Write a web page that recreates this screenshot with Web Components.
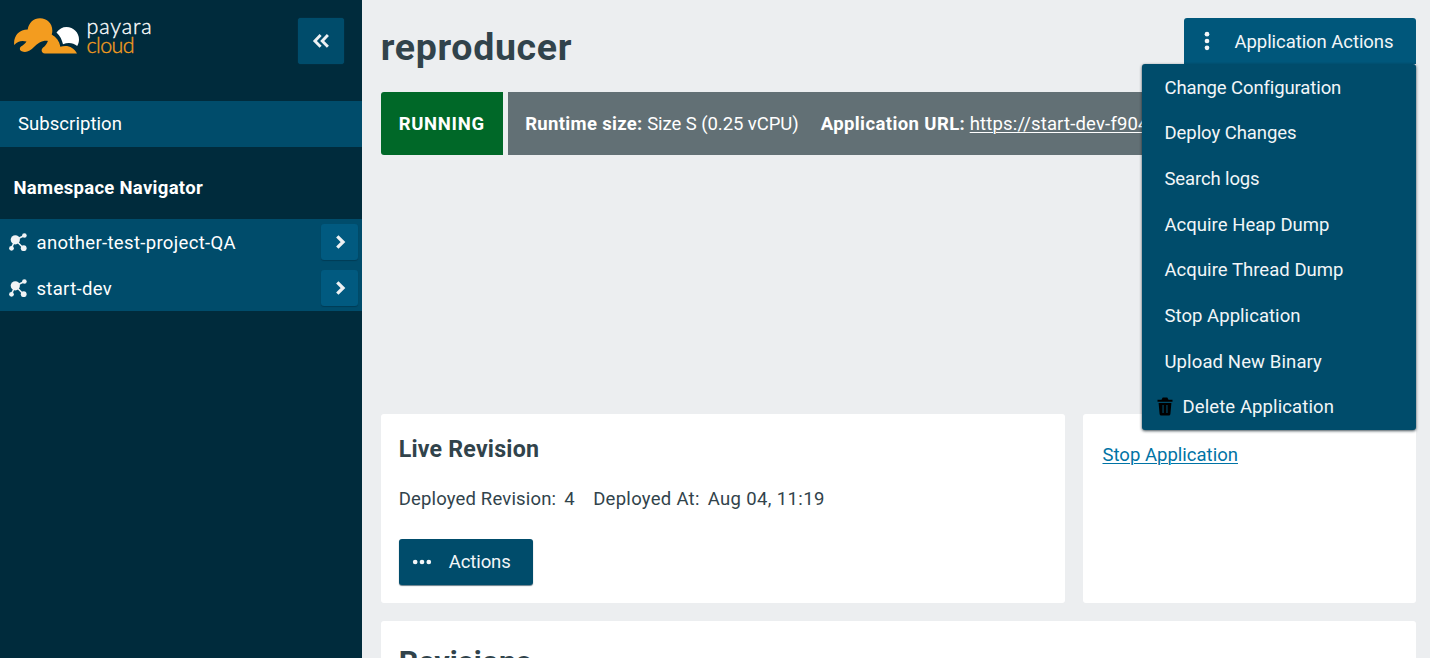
<!DOCTYPE html>
<html lang="en">
<head>
<meta charset="utf-8">
<title>Payara Cloud</title>
<style>
html,body{margin:0;height:100%;overflow:hidden}
body{font-family:Roboto,"Liberation Sans",sans-serif;font-size:18.5px;background:#eceef0}
</style>
</head>
<body>
<cloud-console></cloud-console>
<script>
function define(name, html, init) {
  const template = document.createElement('template');
  template.innerHTML = html;
  customElements.define(name, class extends HTMLElement {
    connectedCallback() {
      if (this.shadowRoot) return;
      this.attachShadow({ mode: 'open' }).appendChild(template.content.cloneNode(true));
      if (init) init.call(this, this.shadowRoot);
    }
  });
}

/* Label whose tracking is adjusted to the advance width in its w attribute. */
define('track-text', `
<style>:host{display:inline-block;white-space:nowrap;flex:none;overflow:visible}span{display:inline-block}
:host([underline]) span{text-decoration:underline;text-underline-offset:2px;text-decoration-thickness:1px;text-decoration-skip-ink:auto}</style>
<span><slot></slot></span>`, function (root) {
  const span = root.querySelector('span');
  const w = parseFloat(this.getAttribute('w'));
  const natural = span.getBoundingClientRect().width;
  this.style.letterSpacing = ((w - natural) / this.textContent.length).toFixed(4) + 'px';
  this.style.width = w + 'px';
});

define('payara-logo', `
<style>
:host{display:flex;width:140px;height:44px;color:#fff}
svg{flex:none;display:block}
.words{display:flex;flex-direction:column;margin-left:6.500px;font:300 21.500px/19.500px Lato,sans-serif;-webkit-text-stroke:.35px currentColor}
.c{color:#f39c1f}
</style>
<svg width="66" height="40" viewBox="0 0 66 40">
<path fill="#fff" d="M42.500 14.500C45 11 48.500 9 52.500 9c7 0 12.500 5.600 12.500 12.500 0 2.400-.7 4.700-1.800 6.500-4-3.300-9.200-3.800-14.200-1.700-1-4.300-2.700-8.300-6.500-11.800z"/>
<path fill="#f39c1f" d="M.2 27C-.8 18 5 11.500 13.700 11.400 14.800 4.800 19.500.2 26 .2c7.200 0 12.500 5.300 12.300 12.700 0 1.500-.2 2.600-.6 3.700 4.700 3 7.700 6.500 8.600 12.200 6.600-2.400 13.400 0 16.700 6.600H31c-3.500 0-4.500-3.600-1.900-5.800 1.800-1.500 3.500-3.500 4.800-6.700-5.900-.6-9.900 2.300-13.900 6.200-3.700 3.700-7.600 6-12.300 4.200-2.300-1-2.400-3.300-.7-4.700 2.200-1.600 4.200-2.500 5.500-5C7.400 22.200 3.600 23.500.2 27z"/>
</svg>
<div class="words"><track-text w="66" style="line-height:17px">payara</track-text><track-text w="47.500" class="c" style="line-height:21.500px">cloud</track-text></div>`);

define('namespace-item', `
<style>
:host{display:flex;align-items:center;height:45.700px;box-sizing:border-box;padding:0 4.500px 0 9px;color:#fff}
.label{margin-left:9.500px;flex:1;line-height:24px;padding-top:1.500px}
.go{width:36.500px;height:36.500px;border-radius:3px;background:#015a80;box-shadow:0 1px 1px #003c56;display:flex;align-items:center;justify-content:center}
svg{display:block}
</style>
<svg width="18" height="18" viewBox="0 0 18 18" fill="#f0f3f5" stroke="#f0f3f5" stroke-width="1.500"><path d="M6.500 7 15.300 2.500M6.500 7 2.200 15.200M6.500 7l8 8.300" fill="none"/><g stroke="none"><circle cx="6.300" cy="6.800" r="4.600"/><circle cx="15.400" cy="2.500" r="2.300"/><circle cx="2.500" cy="15.300" r="2.400"/><circle cx="14.700" cy="15.200" r="2.900"/></g></svg>
<div class="label"><slot></slot></div>
<div class="go"><svg width="16" height="16" viewBox="0 0 16 16"><path d="m5.300 2.300 5.700 5.700-5.700 5.700" fill="none" stroke="#edf1f3" stroke-width="3.300"/></svg></div>`);

define('side-bar', `
<style>
:host{display:flex;flex-direction:column;width:362.400px;flex:none;background:#002b3c;color:#fff}
header{display:flex;justify-content:space-between;align-items:flex-start;height:100.500px;box-sizing:border-box;padding:18.400px 18.400px 0 14px}
button{border:0;padding:0;width:45.700px;height:46px;border-radius:3px;background:#004c6b;display:flex;align-items:center;justify-content:center;box-shadow:0 0 1px #0a5873}
.sub{height:46px;display:flex;align-items:center;background:#004c6b;padding-left:18px}
h2{font-size:18.500px;font-weight:700;margin:0;height:72.800px;box-sizing:border-box;padding:29px 0 0 13.500px;line-height:24px}
nav{background:#004c6b}
</style>
<header><payara-logo></payara-logo><button aria-label="Collapse"><svg width="18" height="16" viewBox="0 0 18 16"><path d="M8.600 2 2.900 7.900l5.700 5.900M15.900 2l-5.700 5.900 5.700 5.900" fill="none" stroke="#edf1f3" stroke-width="2.900"/></svg></button></header>
<div class="sub"><track-text w="104">Subscription</track-text></div>
<h2><track-text w="189.500">Namespace Navigator</track-text></h2>
<nav><namespace-item><track-text w="199.500">another-test-project-QA</track-text></namespace-item><namespace-item><track-text w="75.500">start-dev</track-text></namespace-item></nav>`);

define('action-menu', `
<style>
:host{display:block;position:relative;width:232px;height:46px;color:#f2f6f8;z-index:2}
.trigger{height:46px;border-radius:3px 3px 0 0;background:#00577b;display:flex;align-items:center}
.trigger svg{margin:0 22.500px 0 18px}
.menu{position:absolute;right:0;top:46px;width:274px;box-sizing:border-box;background:#004c6b;border-radius:3px;box-shadow:0 1px 3px rgba(0,20,30,.75)}
.item{height:45.680px;display:flex;align-items:center;padding-left:22.500px;box-sizing:border-box}
track-text{padding-top:1px}
.del{padding-left:15px}
.del svg{margin-right:9.500px}
</style>
<div class="trigger"><svg width="10" height="20" viewBox="0 0 10 20" fill="#f2f6f8"><circle cx="5" cy="3.200" r="2.350"/><circle cx="5" cy="10" r="2.350"/><circle cx="5" cy="16.800" r="2.350"/></svg><track-text w="159">Application Actions</track-text></div>
<div class="menu">
<div class="item"><track-text w="176">Change Configuration</track-text></div>
<div class="item"><track-text w="132">Deploy Changes</track-text></div>
<div class="item"><track-text w="95">Search logs</track-text></div>
<div class="item"><track-text w="165">Acquire Heap Dump</track-text></div>
<div class="item"><track-text w="179">Acquire Thread Dump</track-text></div>
<div class="item"><track-text w="136">Stop Application</track-text></div>
<div class="item"><track-text w="157.500">Upload New Binary</track-text></div>
<div class="item del"><svg width="16" height="19" viewBox="0 0 16 19"><path fill="#000" fill-rule="evenodd" d="M.5 2.700h4L5.700.6h4.600l1.200 2.100h4v2H.5zM1.600 6h12.800l-1 11q-.1 1.600-1.700 1.600H4.300Q2.700 18.600 2.600 17zM5.500 8v8h1.100V8zM9.400 8v8h1.100V8z"/></svg><track-text w="151.500">Delete Application</track-text></div>
</div>`);

define('status-bar', `
<style>
:host{display:flex;gap:4.700px;height:63.500px;color:#fff;border-radius:3px;overflow:hidden}
.state{width:122.300px;background:#006828;display:flex;align-items:center;box-sizing:border-box;padding:1.500px 0 0 18px;font-weight:700;flex:none}
.info{flex:1;background:#627075;display:flex;align-items:center;padding:1.500px 0 0 17.500px;overflow:hidden}
b+track-text{margin-left:4.500px}
.url{margin-left:22px}
</style>
<div class="state"><track-text w="86">RUNNING</track-text></div>
<div class="info"><b><track-text w="117.500">Runtime size:</track-text></b><track-text w="151.500">Size S (0.25 vCPU)</track-text><b class="url"><track-text w="144.500">Application URL:</track-text></b><track-text underline w="179">https://start-dev-f904</track-text></div>`);

define('panel-card', `
<style>:host{display:block;background:#fff;border-radius:3px;box-sizing:border-box;padding:0 18px}</style><slot></slot>`);

define('live-revision', `
<style>
:host{display:block}
h3{font-size:23.200px;font-weight:700;line-height:30px;margin:0;padding-top:20.500px}
.meta{display:flex;margin-top:21.500px;line-height:26px}
.btn{margin-top:27.500px;width:134px;height:45.500px;border-radius:3px;background:#004c6b;color:#f2f6f8;box-shadow:0 1px 1px rgba(0,40,60,.6);display:flex;align-items:center}
.btn svg{margin:0 17px 0 13px}
.btn track-text{padding-top:1px}
</style>
<h3><track-text w="140.500">Live Revision</track-text></h3>
<div class="meta"><track-text w="157.500" style="margin-right:8px">Deployed Revision:</track-text><track-text w="11" style="margin-right:18px">4</track-text><track-text w="106.500" style="margin-right:8px">Deployed At:</track-text><track-text w="117">Aug 04, 11:19</track-text></div>
<div class="btn"><svg width="20" height="10" viewBox="0 0 20 10" fill="#f2f6f8"><circle cx="3.200" cy="5" r="2.350"/><circle cx="10" cy="5" r="2.350"/><circle cx="16.800" cy="5" r="2.350"/></svg><track-text w="62">Actions</track-text></div>`);

define('cloud-console', `
<style>
:host{display:flex;height:658px;width:1430px;overflow:hidden;color:#31434b}
main{flex:1;min-width:0;box-sizing:border-box;padding:18.400px 14px 0 18.300px;display:flex;flex-direction:column}
.top{display:flex;justify-content:space-between;height:73.200px;flex:none}
h1{font-size:37.500px;font-weight:700;line-height:48px;margin:4.500px 0 0 0}
status-bar{flex:none}
.grid{display:grid;grid-template-columns:684.500px 1fr;gap:18.300px;margin-top:258.500px}
.grid>:first-child{height:189.200px}
.stop{display:block;padding:29.500px 0 0 1px;line-height:24px;color:#0073a5}
.wide{grid-column:1/-1;height:120px}
h2{font-size:30.200px;font-weight:700;line-height:38px;margin:0;padding-top:22px}
</style>
<side-bar></side-bar>
<main>
<div class="top"><h1><track-text w="191.500">reproducer</track-text></h1><action-menu></action-menu></div>
<status-bar></status-bar>
<div class="grid">
<panel-card><live-revision></live-revision></panel-card>
<panel-card><a class="stop"><track-text underline w="135.500">Stop Application</track-text></a></panel-card>
<panel-card class="wide"><h2><track-text w="133">Revisions</track-text></h2></panel-card>
</div>
</main>`);
</script>
</body>
</html>
